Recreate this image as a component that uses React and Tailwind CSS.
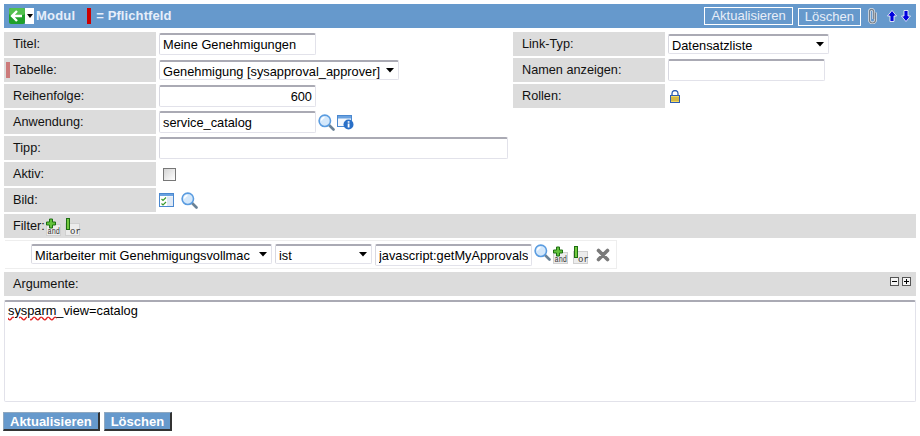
import React from "react";

const font = { fontFamily: '"Liberation Sans", Arial, sans-serif' };
const boxBase =
  "border border-[#e2e2ea] border-t-[#aaaab4] border-t-2 border-l-[#d8d8e0] rounded-[2px] bg-white text-[12.8px] text-[#000] px-[3px] outline-none";
const boxCls = "h-[22px] " + boxBase;

function Label({ children, mandatory }) {
  return (
    <div className="relative w-[152px] h-[24px] shrink-0 bg-[#dcdcdc] flex items-center pl-[9px] pt-[1px] text-[12.7px] text-[#111]">
      {mandatory && <span className="absolute left-[2px] top-[4px] w-[4px] h-[16px] bg-[#cc7a7a]" />}
      {children}
    </div>
  );
}

function Row({ label, mandatory, children }) {
  return (
    <div className="flex h-[24px] items-center">
      <Label mandatory={mandatory}>{label}</Label>
      <div className="flex items-center pl-[3px] gap-[2px] flex-1 min-w-0">{children}</div>
    </div>
  );
}

function Sel({ value, width }) {
  return (
    <div className="relative shrink-0" style={{ width }}>
      <select
        defaultValue={value}
        className={"appearance-none w-full block overflow-hidden pr-[16px] h-[20px] " + boxBase}
      >
        <option>{value}</option>
      </select>
      <svg className="absolute right-[5px] top-[8px]" width="8" height="5" viewBox="0 0 8 5">
        <path d="M0 0h8L4 4.5z" fill="#000" />
      </svg>
    </div>
  );
}

const Magnifier = ({ className = "" }) => (
  <svg className={className} width="17" height="17" viewBox="0 0 17 17">
    <path d="M10.5 10.5l5 5" stroke="#6a8296" strokeWidth="2.6" strokeLinecap="round" />
    <circle cx="6.8" cy="6.8" r="5.7" fill="#d4e8fb" stroke="#5a9ce0" strokeWidth="1.6" />
    <path d="M3.5 6.5a3.3 3.3 0 0 1 3-3" stroke="#fff" strokeWidth="1.4" fill="none" />
  </svg>
);

const InfoWin = () => (
  <svg width="17" height="16" viewBox="0 0 17 16">
    <rect x="0.5" y="1.5" width="14" height="11" fill="#f4f8fd" stroke="#4a88d0" />
    <rect x="1" y="2" width="13" height="2.5" fill="#6aa2e0" />
    <circle cx="11.5" cy="10.5" r="5" fill="#2a70c8" />
    <rect x="10.7" y="9.5" width="1.8" height="4" fill="#fff" />
    <rect x="10.7" y="7.2" width="1.8" height="1.5" fill="#fff" />
  </svg>
);

const CheckWin = () => (
  <svg width="15" height="14" viewBox="0 0 15 14">
    <rect x="0.5" y="0.5" width="14" height="13" fill="#fff" stroke="#4a88d0" />
    <rect x="1" y="1" width="13" height="2" fill="#6aa2e0" />
    <rect x="8" y="3.5" width="6" height="9.5" fill="#dfe9f5" />
    <path d="M2.5 6l1.5 1.5L7 4.5M2.5 10.5L4 12l3-3" stroke="#3c9a2e" strokeWidth="1.2" fill="none" />
  </svg>
);

const AndIcon = () => (
  <svg width="17" height="22" viewBox="0 0 17 22" className="shrink-0 -mb-[4px]">
    <rect x="1.5" y="6.5" width="14" height="11" fill="#ececec" stroke="#d0d0d0" />
    <path d="M4.5 1h3v3h3v3h-3v3h-3V7h-3V4h3z" fill="#62c23a" stroke="#1d6e12" strokeWidth="1" />
    <text x="2.5" y="16" fontSize="8.5" fill="#333" fontFamily="Liberation Mono, monospace" textLength="12.5" lengthAdjust="spacingAndGlyphs">and</text>
  </svg>
);

const OrIcon = () => (
  <svg width="16" height="22" viewBox="0 0 16 22" className="shrink-0 -mb-[4px]">
    <rect x="0.5" y="5.5" width="14" height="12" fill="#ececec" stroke="#d0d0d0" />
    <rect x="1.5" y="0.5" width="3" height="11" fill="#74c840" stroke="#1d6e12" />
    <text x="5" y="16" fontSize="9" fill="#333" fontFamily="Liberation Mono, monospace">or</text>
  </svg>
);

const Lock = () => (
  <svg width="10" height="13" viewBox="0 0 10 13">
    <path d="M2 6V3.5a3 3 0 0 1 6 0V6" fill="none" stroke="#2d5cb0" strokeWidth="1.3" />
    <rect x="0.5" y="5.5" width="9" height="7" fill="#f2d860" stroke="#2d5cb0" />
    <path d="M1 8h8M1 10h8" stroke="#b89a28" />
  </svg>
);

const HeaderBtn = ({ children }) => (
  <button className="h-[18px] border border-white px-[6px] text-[13px] leading-[16px] text-[#e8eef8] bg-transparent">
    {children}
  </button>
);

const BottomBtn = ({ children }) => (
  <button className="h-[19px] px-[6px] bg-[#6699cc] text-white font-bold text-[13px] leading-[17px] border border-[#8fa8c0] border-r-2 border-b-2 border-r-[#333] border-b-[#333]">
    {children}
  </button>
);

export default function App() {
  return (
    <div className="w-[920px] h-[436px] bg-white px-[4px] pt-[4px] overflow-hidden" style={font}>
      <div className="h-[24px] bg-[#6699cc] flex items-center pl-[5px] pr-[5px] text-white">
        <svg width="16" height="16" viewBox="0 0 16 16" className="shrink-0">
          <rect width="16" height="16" rx="2" fill="#1fa02a" />
          <rect width="16" height="7" rx="2" fill="#53c04f" />
          <path d="M8 3L3 8l5 5M3.5 8H13" stroke="#fff" strokeWidth="2.4" fill="none" />
        </svg>
        <span className="w-[9px] h-[16px] bg-white flex items-center justify-center shrink-0">
          <svg width="6" height="4" viewBox="0 0 6 4"><path d="M0 0h6L3 4z" fill="#000" /></svg>
        </span>
        <span className="ml-[2px] font-bold text-[13px] text-[#e6eefa] tracking-[0.2px]">Modul</span>
        <span className="ml-[12px] w-[4px] h-[16px] bg-[#cc0000]" />
        <span className="ml-[5px] font-bold text-[13px] text-[#e6eefa] tracking-[0.1px]">= Pflichtfeld</span>
        <div className="ml-auto flex items-center">
          <HeaderBtn>Aktualisieren</HeaderBtn>
          <span className="ml-[5px]"><HeaderBtn>Löschen</HeaderBtn></span>
          <svg className="ml-[6px]" width="11" height="16" viewBox="0 0 11 16">
            <path d="M8.5 4.5v7.5a3 3 0 0 1-6 0V3.5a2.1 2.1 0 0 1 4.2 0V11" fill="none" stroke="#dbe2ea" strokeWidth="2.8" />
            <path d="M8.5 4.5v7.5a3 3 0 0 1-6 0V3.5a2.1 2.1 0 0 1 4.2 0V11" fill="none" stroke="#77808a" strokeWidth="1.2" />
          </svg>
          <svg className="ml-[9px]" width="10" height="12" viewBox="0 0 10 12">
            <path d="M5 .5L9.5 6H7v5.5H3V6H.5z" fill="#0000dd" stroke="#fff" strokeWidth="0.8" />
          </svg>
          <svg className="ml-[4px]" width="10" height="12" viewBox="0 0 10 12">
            <path d="M5 11.5L9.5 6H7V.5H3V6H.5z" fill="#0000dd" stroke="#fff" strokeWidth="0.8" />
          </svg>
        </div>
      </div>

      <div className="mt-[4px] flex">
        <div className="w-[509px] shrink-0 flex flex-col gap-[2px]">
          <Row label="Titel:">
            <input readOnly value="Meine Genehmigungen" className={"w-[157px] " + boxCls} />
          </Row>
          <Row label="Tabelle:" mandatory>
            <Sel width="240px" value="Genehmigung [sysapproval_approver]" />
          </Row>
          <Row label="Reihenfolge:">
            <input readOnly value="600" className={"w-[157px] text-right " + boxCls} />
          </Row>
          <Row label="Anwendung:">
            <input readOnly value="service_catalog" className={"w-[157px] " + boxCls} />
            <Magnifier />
            <InfoWin />
          </Row>
          <Row label="Tipp:">
            <input readOnly value="" className={"w-[349px] " + boxCls} />
          </Row>
          <Row label="Aktiv:">
            <span className="ml-[4px] w-[13px] h-[13px] border border-[#777] bg-gradient-to-br from-[#d4d4d4] to-[#ffffff]" />
          </Row>
          <Row label="Bild:">
            <CheckWin />
            <span className="ml-[5px]"><Magnifier /></span>
          </Row>
        </div>
        <div className="flex flex-col gap-[2px] w-[394px]">
          <Row label="Link-Typ:">
            <Sel width="161px" value="Datensatzliste" />
          </Row>
          <Row label="Namen anzeigen:">
            <input readOnly value="" className={"w-[157px] " + boxCls} />
          </Row>
          <Row label="Rollen:">
            <span className="ml-[2px] flex"><Lock /></span>
          </Row>
        </div>
      </div>

      <div className="mt-[2px] h-[24px] bg-[#dcdcdc] flex items-center pl-[9px] pt-[1px] text-[12.7px] text-[#111]">
        Filter:
        <AndIcon />
        <span className="ml-[3px] flex"><OrIcon /></span>
      </div>

      <div className="mt-[2px] h-[29px] w-[612px] ml-[1px] border border-[#eeeeee] border-l-0 flex items-center pl-[26px]">
        <span className="-mt-[2px]"><Sel width="241px" value="Mitarbeiter mit Genehmigungsvollmac" /></span>
        <span className="ml-[3px] -mt-[2px]"><Sel width="97px" value="ist" /></span>
        <input readOnly value="javascript:getMyApprovals" className={"ml-[3px] w-[157px] " + boxCls} />
        <Magnifier className="ml-[2px] -mt-[4px]" />
        <span className="flex ml-[1px]"><AndIcon /></span>
        <span className="flex ml-[4px]"><OrIcon /></span>
        <svg className="ml-[7px]" width="14" height="14" viewBox="0 0 14 14">
          <path d="M2.5 2.5l9 9M11.5 2.5l-9 9" stroke="#7a7a7a" strokeWidth="3.6" strokeLinecap="round" />
        </svg>
      </div>

      <div className="mt-[3px] h-[24px] bg-[#dcdcdc] flex items-center pl-[9px] pt-[1px] pr-[5px] text-[12.7px] text-[#111]">
        Argumente:
        <div className="ml-auto -mt-[7px] flex gap-[3px]">
          <span className="w-[9px] h-[9px] border border-[#555] bg-[#f4f4f4] flex items-center justify-center">
            <span className="w-[5px] h-px bg-black" />
          </span>
          <span className="relative w-[9px] h-[9px] border border-[#555] bg-[#f4f4f4] flex items-center justify-center">
            <span className="w-[5px] h-px bg-black" />
            <span className="absolute left-[3px] top-[1px] w-px h-[5px] bg-black" />
          </span>
        </div>
      </div>

      <div className="mt-[4px] h-[102px] border border-[#e2e2ea] border-t-[#aaaab4] border-t-2 rounded-[2px] px-[3px] pt-[1px] text-[12.8px] leading-[16px] text-black">
        <span className="underline decoration-wavy decoration-[#e02020]">sysparm</span>_view=catalog
      </div>

      <div className="mt-[10px] flex gap-[4px] -ml-[1px]">
        <BottomBtn>Aktualisieren</BottomBtn>
        <BottomBtn>Löschen</BottomBtn>
      </div>
    </div>
  );
}
